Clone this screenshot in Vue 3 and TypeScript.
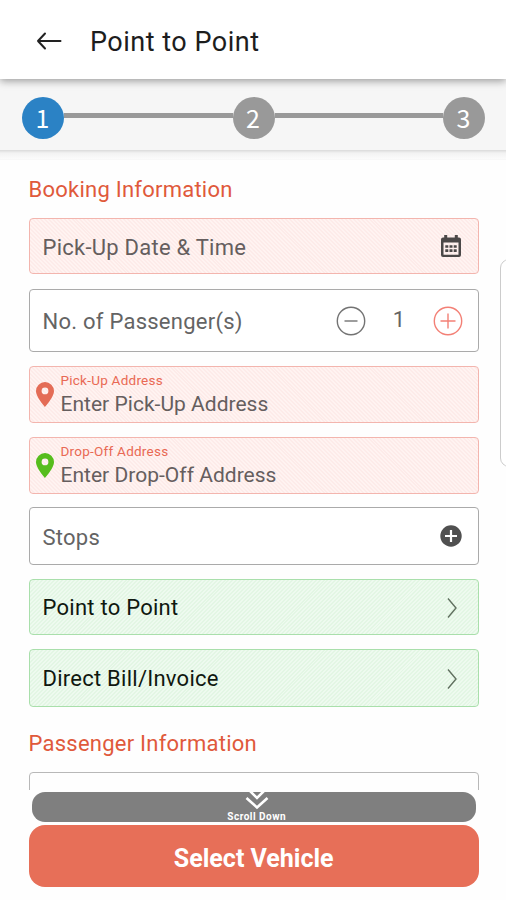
<script setup lang="ts">
import { ref } from 'vue'

interface AddressField {
  kind: 'pickup' | 'dropoff'
  label: string
  placeholder: string
}

const steps: number[] = [1, 2, 3]
const currentStep = ref(1)
const passengers = ref(1)

const addresses: AddressField[] = [
  { kind: 'pickup', label: 'Pick-Up Address', placeholder: 'Enter Pick-Up Address' },
  { kind: 'dropoff', label: 'Drop-Off Address', placeholder: 'Enter Drop-Off Address' },
]

const choices: { cls: string; text: string }[] = [
  { cls: 'service', text: 'Point to Point' },
  { cls: 'billing', text: 'Direct Bill/Invoice' },
]
</script>

<template>
  <div class="screen">
    <header class="topbar">
      <svg class="back" viewBox="0 0 26 20" width="26" height="20">
        <path d="M24.500 10H2M9 2.500L2 10l7 7.500" />
      </svg>
      <h1>Point to Point</h1>
    </header>

    <nav class="stepper">
      <template v-for="step in steps" :key="step">
        <span v-if="step > 1" class="line"></span>
        <span class="dot" :class="{ active: step === currentStep }">{{ step }}</span>
      </template>
    </nav>
    <div class="stepper-edge"></div>

    <main class="form">
      <h2 class="booking">Booking Information</h2>

      <div class="field required date">
        <span class="text">Pick-Up Date &amp; Time</span>
        <svg class="calendar" viewBox="0 0 20 22" width="20" height="22">
          <path class="body" fill-rule="evenodd" d="M2 2.500H3.200V0H6.200V2.500H13.800V0H16.800V2.500H18Q20 2.500 20 4.500V20Q20 22 18 22H2Q0 22 0 20V4.500Q0 2.500 2 2.500ZM2.500 7.500V19.700H17.500V7.500Z" />
          <path class="cells" d="M4.300 11.500H15.700M4.300 15.700H15.700" />
        </svg>
      </div>

      <div class="field passengers">
        <span class="text">No. of Passenger(s)</span>
        <svg class="round minus" viewBox="0 0 30 30" width="30" height="30" @click="passengers--">
          <circle cx="15" cy="15" r="13.700" /><path d="M8.500 15h13" />
        </svg>
        <span class="count">{{ passengers }}</span>
        <svg class="round plus" viewBox="0 0 30 30" width="30" height="30" @click="passengers++">
          <circle cx="15" cy="15" r="13.700" /><path d="M7.500 15h15M15 7.500v15" />
        </svg>
      </div>

      <div v-for="a in addresses" :key="a.kind" class="field required address" :class="a.kind">
        <svg class="pin" viewBox="0 0 18 25" width="18" height="25">
          <path fill-rule="evenodd" d="M9 0a9 9 0 0 0-9 9c0 6.200 9 16 9 16s9-9.800 9-16a9 9 0 0 0-9-9zm0 5.500a3.400 3.400 0 1 1 0 6.800 3.400 3.400 0 0 1 0-6.800z" />
        </svg>
        <div class="stack">
          <span class="label">{{ a.label }}</span>
          <span class="text">{{ a.placeholder }}</span>
        </div>
      </div>

      <div class="field stops">
        <span class="text">Stops</span>
        <svg class="add" viewBox="0 0 22 22" width="22" height="22">
          <circle cx="11" cy="11" r="10.700" /><path d="M11 5v12M5 11h12" />
        </svg>
      </div>

      <div v-for="c in choices" :key="c.cls" class="field filled" :class="c.cls">
        <span class="text">{{ c.text }}</span>
        <svg class="chevron" viewBox="0 0 10 20" width="10" height="20">
          <path d="M1 .5L9 10 1 19.500" />
        </svg>
      </div>

      <h2 class="passenger">Passenger Information</h2>
      <div class="peek"></div>
    </main>

    <footer class="actions">
      <div class="scroll-hint">
        <svg viewBox="0 0 24 18" width="24" height="18">
          <path d="M5 -1L12 6 19 -1M1.500 6L12 15.500 22.500 6" />
        </svg>
        <span>Scroll Down</span>
      </div>
      <button class="submit">Select Vehicle</button>
    </footer>
    <span class="side-handle"></span>
  </div>
</template>

<style>
body {
  background: #fff;
}
</style>

<style scoped>
.screen {
  position: relative;
  width: 506px;
  height: 900px;
  overflow: hidden;
  background: #fefefe;
  font-family: Roboto, "Liberation Sans", sans-serif;
  display: flex;
  flex-direction: column;
}
.screen * {
  box-sizing: border-box;
}
.topbar {
  position: relative;
  z-index: 1;
  flex: none;
  height: 79px;
  padding: 4px 0 0 36px;
  display: flex;
  align-items: center;
  background: #fff;
  box-shadow: 0 2px 8px rgba(0, 0, 0, 0.38);
}
.back {
  margin-top: -2px;
  fill: none;
  stroke: #222;
  stroke-width: 2;
  stroke-linecap: round;
  stroke-linejoin: round;
}
h1 {
  margin: 0 0 0 28px;
  font-size: 27px;
  line-height: 32px;
  font-weight: 400;
  letter-spacing: 0.5px;
  color: #1d1d1d;
}
.stepper {
  flex: none;
  height: 71px;
  padding: 7px 21px 0 22px;
  display: flex;
  align-items: center;
  background: #f6f6f6;
}
.dot {
  width: 42px;
  height: 42px;
  border-radius: 50%;
  background: #999;
  color: #fff;
  font-family: "Noto Sans CJK SC", sans-serif;
  font-size: 25px;
  line-height: 41px;
  text-align: center;
  text-indent: -1px;
}
.dot.active {
  background: #2b82c5;
}
.line {
  flex: 1;
  height: 5px;
  margin-top: -5px;
  background: #999;
}
.stepper-edge {
  flex: none;
  height: 10px;
  background: linear-gradient(#dadada, #f2f2f2 30%, #fbfbfb 90%, #f5f5f5);
}
.form {
  flex: none;
  height: 630px;
  overflow: hidden;
  padding: 0 27.500px 0 28.500px;
}
h2 {
  margin: 0;
  font-size: 22px;
  line-height: 26px;
  font-weight: 400;
  letter-spacing: 0.24px;
  color: #e0593b;
}
.booking {
  padding-top: 17px;
}
.field {
  display: flex;
  align-items: center;
  height: 57px;
  margin-bottom: 14px;
  padding: 0 17px 0 13px;
  border: 1.500px solid #aaa;
  border-radius: 4px;
  background: #fff;
  color: #646464;
  font-size: 22px;
  line-height: 26px;
}
.text {
  flex: 1;
  letter-spacing: 0.25px;
  white-space: nowrap;
}
.required {
  border-color: #f3b5ae;
  background: repeating-linear-gradient(45deg, #fdebe9 0 1.400px, #fff3f1 1.400px 2.800px);
  color: #655e5e;
}
.filled {
  padding-top: 2px;
  border-color: #a9dfab;
  background: repeating-linear-gradient(135deg, #e3f6e4 0 1.400px, #eefaef 1.400px 2.800px);
  color: #101810;
}
.date {
  height: 56px;
  margin-top: 15px;
  margin-bottom: 15px;
}
.date .text,
.passengers .text,
.stops .text {
  padding-top: 3px;
}
.calendar {
  margin-top: -1px;
}
.calendar .body {
  fill: #4b4848;
}
.calendar .cells {
  fill: none;
  stroke: #4b4848;
  stroke-width: 2.700;
  stroke-dasharray: 3 1.200;
}
.passengers {
  height: 63px;
  padding-right: 15px;
}
.round {
  fill: none;
  stroke: #737373;
  stroke-width: 1.400;
}
.plus {
  stroke: #f38076;
}
.count {
  width: 67px;
  padding-bottom: 2px;
  text-align: center;
}
.address {
  padding-left: 6px;
}
.pin {
  flex: none;
  margin-top: -1px;
  fill: #e46c56;
}
.dropoff {
  margin-bottom: 13px;
}
.dropoff .pin {
  fill: #56bd1d;
}
.stack {
  display: flex;
  flex-direction: column;
  margin-left: 7px;
  padding-top: 3px;
}
.label {
  font-size: 13.500px;
  line-height: 16px;
  letter-spacing: 0.25px;
  color: #e96954;
}
.stack .text {
  font-size: 21px;
  line-height: 33px;
  letter-spacing: 0.02px;
}
.stops {
  height: 58px;
}
.add {
  margin-right: -1px;
  fill: #505050;
  stroke: none;
}
.add path {
  stroke: #fff;
  stroke-width: 2.200;
}
.service {
  height: 56px;
}
.billing {
  height: 58px;
}
.chevron {
  margin-right: 4px;
  fill: none;
  stroke: #60705f;
  stroke-width: 1.400;
}
.passenger {
  padding-top: 10px;
}
.peek {
  height: 40px;
  margin-top: 15px;
  border: 1.500px solid #b8b8b8;
  border-radius: 4px;
}
.actions {
  display: flex;
  flex-direction: column;
  padding: 2px 27px 0 28.500px;
}
.scroll-hint {
  display: flex;
  flex-direction: column;
  align-items: center;
  height: 30px;
  margin: 0 3px 3px;
  padding-left: 6px;
  overflow: hidden;
  border-radius: 13px;
  background: #7f7f7f;
  color: #fff;
  font-size: 10px;
  font-weight: 700;
  line-height: 14px;
  letter-spacing: 0.5px;
}
.scroll-hint svg {
  flex: none;
  fill: none;
  stroke: #fff;
  stroke-width: 2.600;
}
.submit {
  height: 62px;
  padding: 5px 0 0;
  border: 0;
  border-radius: 16px;
  background: #e76f58;
  color: #fff;
  font: 700 25px/30px Roboto, "Liberation Sans", sans-serif;
}
.side-handle {
  position: absolute;
  top: 259px;
  left: 500px;
  width: 20px;
  height: 208px;
  border: 1.500px solid #ccc;
  border-radius: 9px;
  background: #fff;
}
</style>
